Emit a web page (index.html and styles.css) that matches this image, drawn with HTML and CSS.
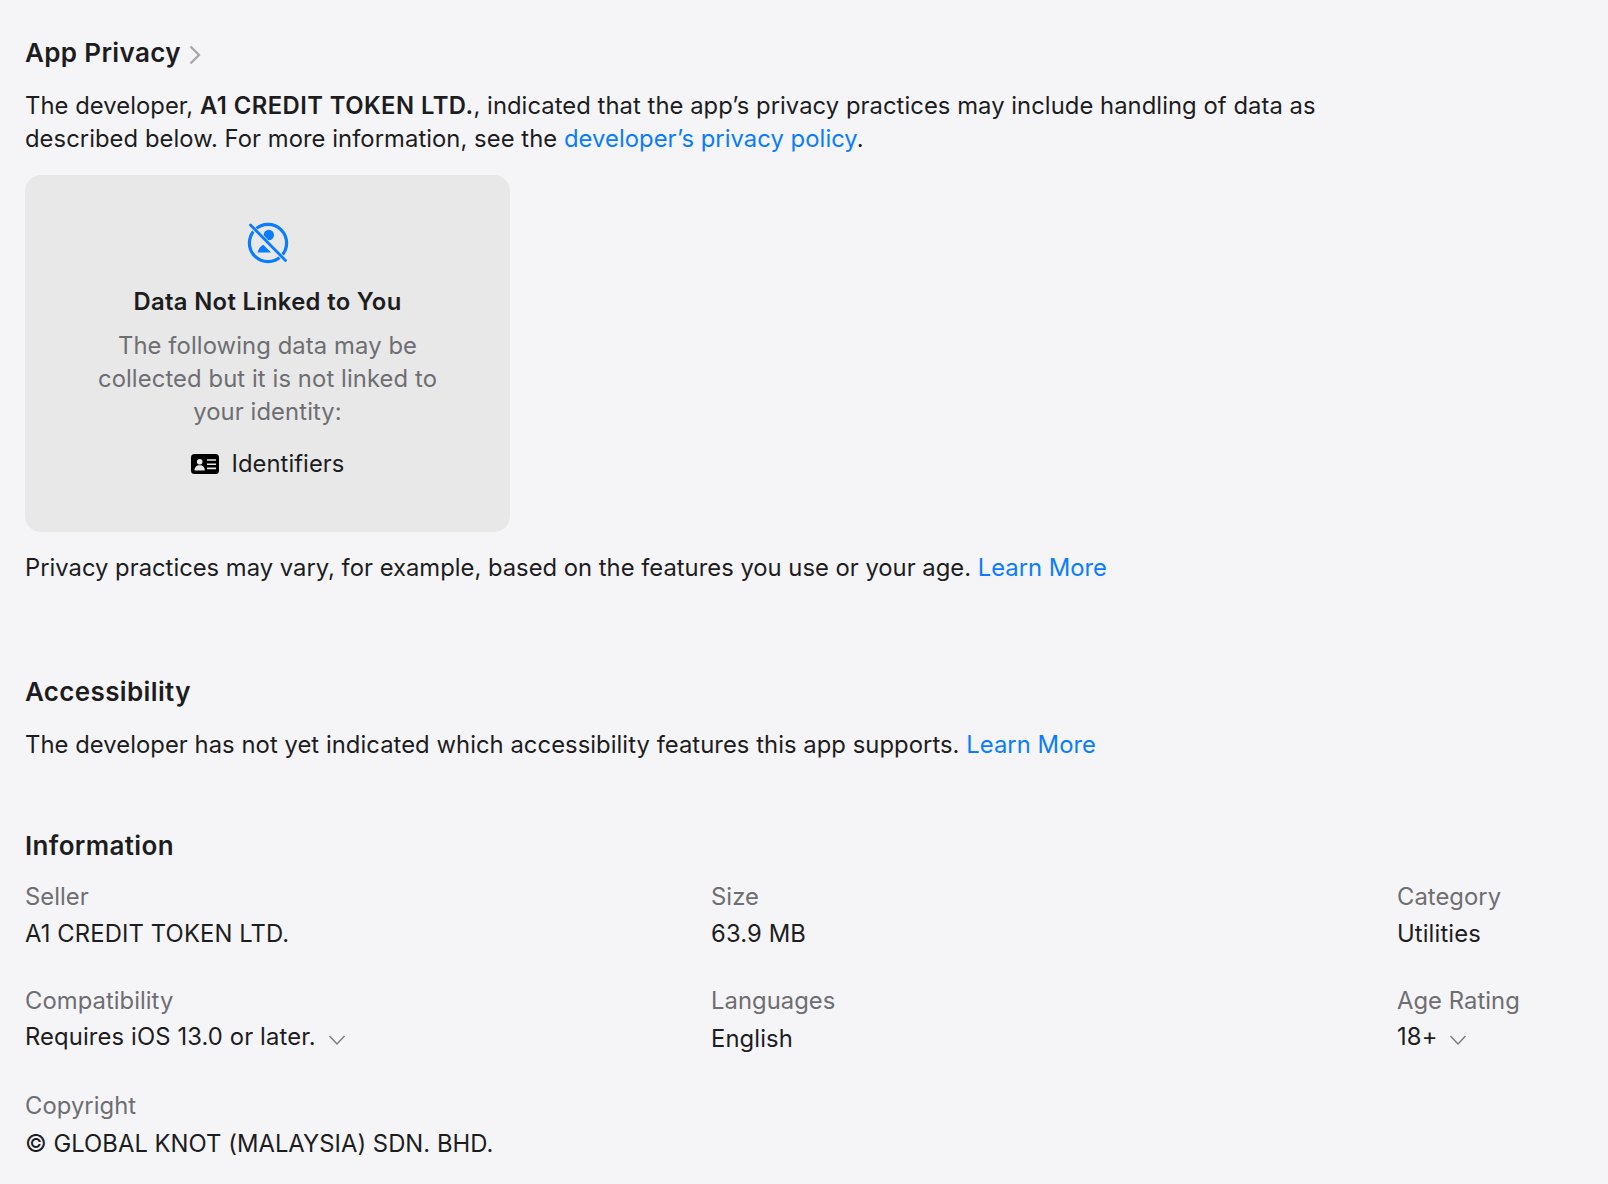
FILE: index.html
```html
<!DOCTYPE html>
<html>
<head>
  <meta charset="utf-8">
  <title>App Privacy</title>
  <link rel="stylesheet" href="styles.css">
</head>
<body>
<section class="privacy">
  <h2 class="section-title">App Privacy
    <svg class="title-arrow" viewBox="0 0 12 20"><path d="M1.500 1.500l8.500 8.500-8.500 8.500"/></svg>
  </h2>
  <p class="intro">The developer, <b>A1 CREDIT TOKEN LTD.</b>, indicated that the app’s privacy practices may include handling of data as described below. For more information, see the <a href="#">developer’s privacy policy</a>.</p>
  <div class="card">
    <svg class="card-icon" viewBox="0 0 42 42">
      <circle class="ring" cx="21" cy="21" r="18.6"/>
      <circle class="head" cx="21.800" cy="13" r="5.200"/>
      <path class="slash-gap" d="M3 3l36 36"/>
      <path class="body" d="M10.500 30.500c.8-3.800 3-6.600 5.800-7.800l7.800 7.800z"/>
      <path class="slash" d="M3.500 3l35 35.500"/>
    </svg>
    <h3>Data Not Linked to You</h3>
    <p>The following data may be collected but it is not linked to your identity:</p>
    <div class="data-type">
      <svg class="id-icon" viewBox="0 0 28 20">
        <rect width="28" height="20" rx="3.500"/>
        <circle class="id-mark" cx="8.700" cy="7.700" r="2.800"/>
        <path class="id-mark" d="M3.500 16.500c0-3.300 2.300-5.200 5.200-5.200s5.100 1.900 5.100 5.200z"/>
        <path class="id-line" d="M16 6h9M16 10.200h9M16 14.400h9"/>
      </svg>
      <span>Identifiers</span>
    </div>
  </div>
  <p class="note">Privacy practices may vary, for example, based on the features you use or your age. <a href="#">Learn More</a></p>
</section>

<section class="accessibility">
  <h2 class="section-title">Accessibility</h2>
  <p>The developer has not yet indicated which accessibility features this app supports. <a href="#">Learn More</a></p>
</section>

<section class="information">
  <h2 class="section-title">Information</h2>
  <dl class="info-grid">
    <div class="info-item"><dt>Seller</dt><dd>A1 CREDIT TOKEN LTD.</dd></div>
    <div class="info-item"><dt>Size</dt><dd>63.9 MB</dd></div>
    <div class="info-item"><dt>Category</dt><dd>Utilities</dd></div>
    <div class="info-item compact"><dt>Compatibility</dt><dd>Requires iOS 13.0 or later.
      <svg class="chevron" viewBox="0 0 18 12"><path d="M1.500 2l7.500 8 7.500-8"/></svg></dd></div>
    <div class="info-item"><dt>Languages</dt><dd class="lang">English</dd></div>
    <div class="info-item compact"><dt>Age Rating</dt><dd>18+
      <svg class="chevron" viewBox="0 0 18 12"><path d="M1.500 2l7.500 8 7.500-8"/></svg></dd></div>
    <div class="info-item copyright"><dt>Copyright</dt><dd>© GLOBAL KNOT (MALAYSIA) SDN. BHD.</dd></div>
  </dl>
</section>
</body>
</html>
```

FILE: styles.css
```css
body { margin: 0; padding: 36px 25px 0; background: #f5f5f7; color: #1d1d1f; font-family: Inter, "Liberation Sans", sans-serif; font-size: 23.8px; line-height: 33px; letter-spacing: 0.05px; overflow: hidden; height: 1148px; }
a { color: #0a7cff; text-decoration: none; }
p { margin: 0; }
b { font-weight: 600; letter-spacing: 0.45px; }

.section-title { margin: 0 0 20px; font-size: 26px; line-height: 33px; font-weight: 600; letter-spacing: 0.35px; }
.title-arrow { width: 12px; height: 20px; margin-left: 1px; vertical-align: -3px; }
.title-arrow path { fill: none; stroke: #a8a8aa; stroke-width: 2.4; }

.intro { width: 1300px; }
.note { letter-spacing: 0; }

/* privacy card */
.card { box-sizing: border-box; width: 485px; height: 357px; margin: 20px 0 19px; padding: 47px 54px 0; background: #e8e8e8; border-radius: 16px; text-align: center; }
.card-icon { display: block; width: 42px; height: 42px; margin: 0 auto 21px; }
.card-icon .ring { fill: none; stroke: #0a7cff; stroke-width: 3.2; }
.card-icon .head, .card-icon .body { fill: #0a7cff; }
.card-icon .slash-gap { stroke: #e8e8e8; stroke-width: 4.5; }
.card-icon .slash { stroke: #0a7cff; stroke-width: 2.8; stroke-linecap: round; }
.card h3 { margin: 0 0 11px; font-size: 23.8px; line-height: 33px; font-weight: 600; letter-spacing: 0.35px; }
.card p { color: #6e6e73; letter-spacing: 0.1px; }
.data-type { display: flex; justify-content: center; align-items: center; gap: 13px; margin-top: 19px; }
.id-icon { width: 28px; height: 20px; }
.id-mark { fill: #e8e8e8; }
.id-line { fill: none; stroke: #e8e8e8; stroke-width: 1.6; }

/* accessibility */
.accessibility { margin-top: 91px; }
.information { margin-top: 68px; }
.information .section-title { margin-bottom: 18px; }

/* information grid */
.info-grid { display: grid; grid-template-columns: 686px 686px 1fr; row-gap: 34px; margin: 0; }
dt { color: #6e6e73; line-height: 33px; }
dd { margin: 4px 0 0; line-height: 33px; letter-spacing: 0.12px; }
dd.lang { margin-top: 5px; }
.compact dd { margin-top: 3px; }
.copyright dd { margin-top: 5px; letter-spacing: 0.03px; }
.chevron { width: 18px; height: 12px; margin-left: 5px; vertical-align: -1px; }
.chevron path { fill: none; stroke: #7a7a7e; stroke-width: 1.4; }
```
